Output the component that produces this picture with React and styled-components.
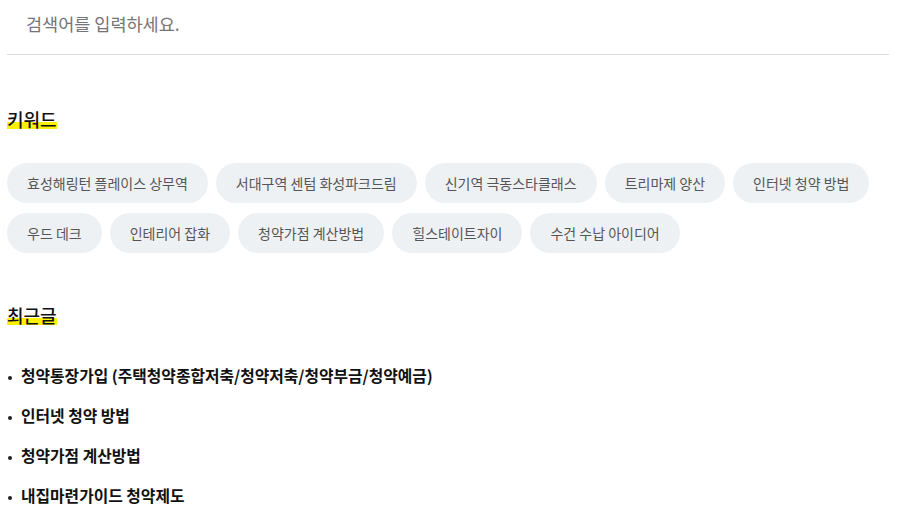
import React from 'react';
import styled, { createGlobalStyle } from 'styled-components';

const GlobalStyle = createGlobalStyle`
  body {
    margin: 0;
    background: #fff;
    font-family: "Noto Sans CJK KR", "Noto Sans", sans-serif;
    color: #111;
  }
`;

const Page = styled.div`
  padding: 0 11px 0 7px;
`;

const SearchInput = styled.input`
  display: block;
  width: 100%;
  box-sizing: border-box;
  height: 55px;
  border: none;
  border-bottom: 1px solid #dcdcdc;
  padding: 0 19px 8px;
  font-family: inherit;
  font-size: 17.5px;
  color: #333;
  outline: none;
  background: transparent;

  ::placeholder {
    color: #8a8a8a;
  }
`;

const Section = styled.section`
  margin-top: ${(props) => props.top}px;
`;

const Heading = styled.h3`
  display: inline-block;
  margin: 0;
  font-size: 18px;
  font-weight: 500;
  line-height: 22px;
  color: #111;
  background: linear-gradient(to bottom, transparent 65%, #fff000 65%, #fff000 95%, transparent 95%);
`;

const ChipList = styled.div`
  display: flex;
  flex-wrap: wrap;
  gap: 10px 8px;
  margin-top: 31px;
`;

const Chip = styled.a`
  display: inline-flex;
  align-items: center;
  height: 40px;
  padding: 0 20px;
  border-radius: 20px;
  background: #eef1f4;
  color: #555;
  font-size: 14px;
  cursor: pointer;
`;

const PostList = styled.ul`
  list-style: none;
  margin: 37px 0 0;
  padding: 0;
  display: flex;
  flex-direction: column;
  gap: 18px;
`;

const PostItem = styled.li`
  display: flex;
  align-items: center;
  gap: 9px;
  font-size: 15.8px;
  font-weight: 700;
  line-height: 22px;
  color: #111;

  &::before {
    content: '';
    width: 4px;
    height: 4px;
    border-radius: 50%;
    background: #222;
    margin: 4px 0 0 1px;
  }
`;

const keywords = [
  '효성해링턴 플레이스 상무역',
  '서대구역 센텀 화성파크드림',
  '신기역 극동스타클래스',
  '트리마제 양산',
  '인터넷 청약 방법',
  '우드 데크',
  '인테리어 잡화',
  '청약가점 계산방법',
  '힐스테이트자이',
  '수건 수납 아이디어',
];

const posts = [
  '청약통장가입 (주택청약종합저축/청약저축/청약부금/청약예금)',
  '인터넷 청약 방법',
  '청약가점 계산방법',
  '내집마련가이드 청약제도',
];

export default function App() {
  return (
    <>
      <GlobalStyle />
      <Page>
        <SearchInput placeholder="검색어를 입력하세요." />
        <Section top={53}>
          <Heading>키워드</Heading>
          <ChipList>
            {keywords.map((k) => (
              <Chip key={k}>{k}</Chip>
            ))}
          </ChipList>
        </Section>
        <Section top={51}>
          <Heading>최근글</Heading>
          <PostList>
            {posts.map((p) => (
              <PostItem key={p}>{p}</PostItem>
            ))}
          </PostList>
        </Section>
      </Page>
    </>
  );
}
